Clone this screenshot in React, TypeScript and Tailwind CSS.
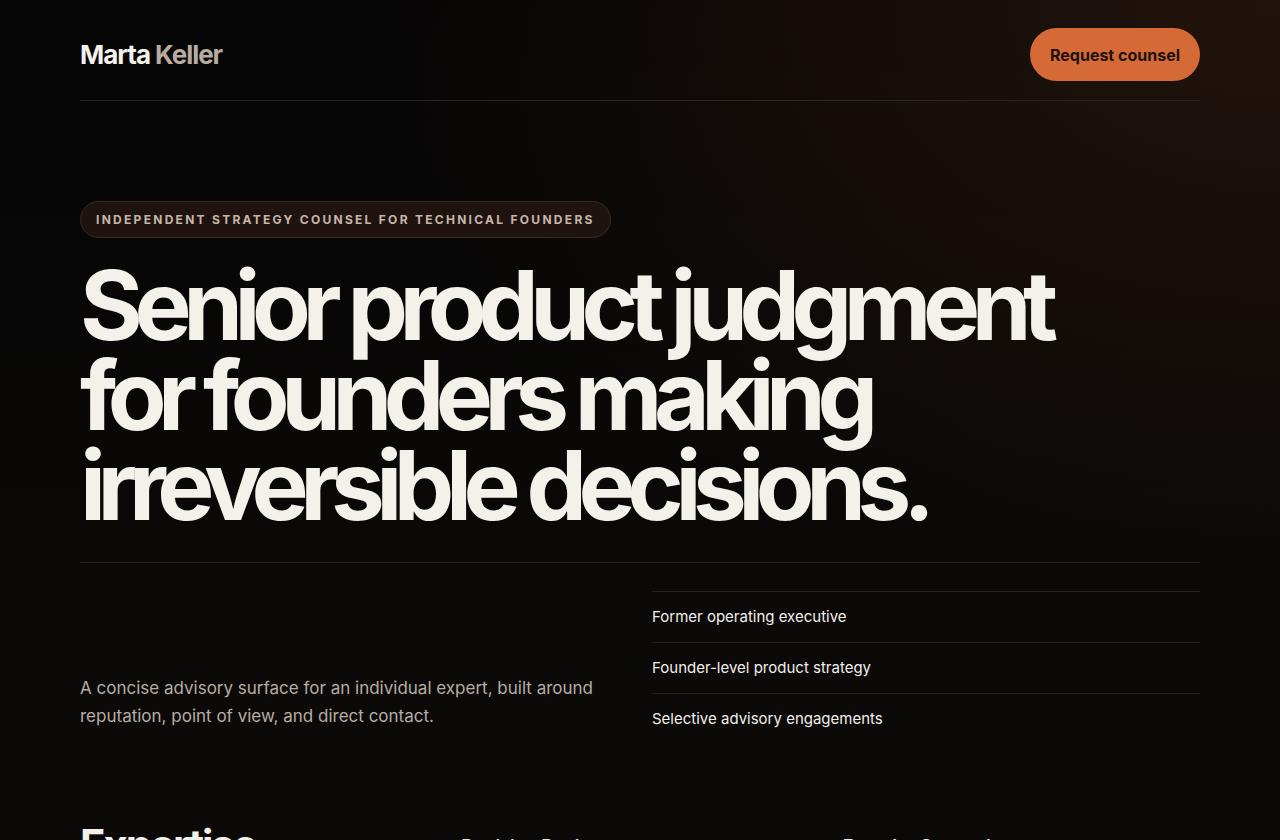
export default function App() {
  const credentials = [
    "Former operating executive",
    "Founder-level product strategy",
    "Selective advisory engagements",
  ];

  return (
    <main
      className="min-h-screen bg-[#0a0908] bg-[radial-gradient(ellipse_70%_60%_at_100%_0%,#22140c_0%,rgba(10,9,8,0)_100%),linear-gradient(180deg,#060505_0%,#0b0a09_70%)] text-[#f4f0ea]"
      style={{ fontFamily: "Inter, 'Noto Sans', sans-serif" }}
    >
      <div className="mx-auto w-full max-w-[1120px]">
        <header className="flex items-center justify-between border-b border-[#2a2623] pt-7 pb-[19px]">
          <a className="text-[26px] font-bold tracking-[-0.04em] text-[#f4f0ea]">
            Marta <span className="text-[#b8aca1]">Keller</span>
          </a>
          <button className="h-[53px] rounded-full bg-[#d66a37] px-5 text-base font-bold text-[#1b120c]">
            Request counsel
          </button>
        </header>

        <section className="pt-[100px]">
          <span className="inline-flex h-[37px] items-center rounded-full border border-[#3a2a21] bg-[#1e130e] px-[15px] text-xs font-bold uppercase tracking-[0.19em] text-[#c7b6a8]">
            Independent strategy counsel for technical founders
          </span>
          <h1 className="mt-[22px] max-w-[1000px] text-[96px] font-bold leading-[90px] tracking-[-0.088em] text-[#f4f0ea]">
            Senior product judgment for founders making irreversible decisions.
          </h1>

          <div className="mt-8 grid grid-cols-2 items-end gap-6 border-t border-[#24211e] pt-7">
            <p className="pb-[14px] text-[17px] leading-[28px] text-[#b8ada2]">
              A concise advisory surface for an individual expert, built around
              <br />
              reputation, point of view, and direct contact.
            </p>
            <ul>
              {credentials.map((item) => (
                <li
                  key={item}
                  className="border-t border-[#24211e] py-[13px] text-[15px] leading-6 text-[#f4efe9]"
                >
                  {item}
                </li>
              ))}
            </ul>
          </div>
        </section>

        <section className="grid grid-cols-3 gap-6 pt-[80px] pb-20">
          <h2 className="text-[42px] font-bold leading-none tracking-[-0.05em] text-[#f4f0ea]">
            Expertise
          </h2>
          <div className="pt-[9px]">
            <h3 className="text-lg font-semibold text-[#f1ece6]">Decision Design</h3>
            <p className="mt-2 text-base leading-7 text-[#b8ada2]">
              Framing the bets that shape a company before they harden into roadmap.
            </p>
          </div>
          <div className="pt-[9px]">
            <h3 className="text-lg font-semibold text-[#f1ece6]">Founder Counsel</h3>
            <p className="mt-2 text-base leading-7 text-[#b8ada2]">
              A trusted second opinion on hiring, pricing, and positioning.
            </p>
          </div>
        </section>
      </div>
    </main>
  );
}
